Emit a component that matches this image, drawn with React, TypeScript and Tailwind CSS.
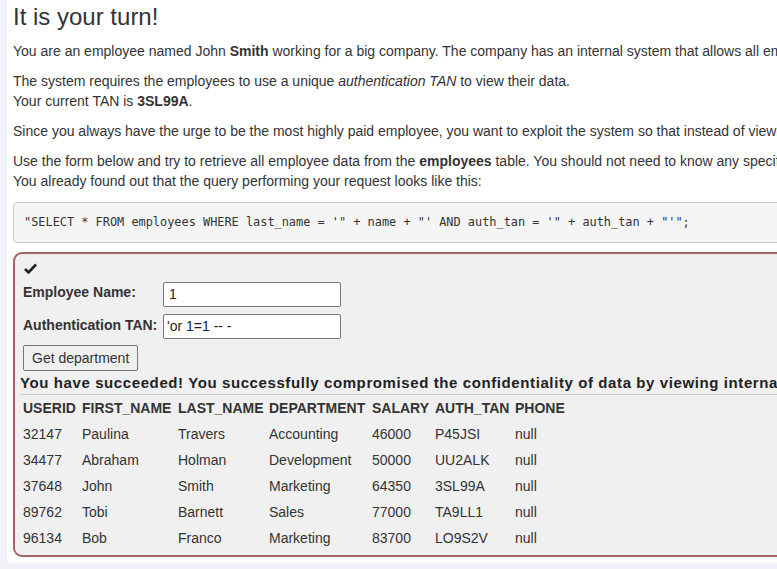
import React from 'react';

const rows = [
  ['32147', 'Paulina', 'Travers', 'Accounting', '46000', 'P45JSI', 'null'],
  ['34477', 'Abraham', 'Holman', 'Development', '50000', 'UU2ALK', 'null'],
  ['37648', 'John', 'Smith', 'Marketing', '64350', '3SL99A', 'null'],
  ['89762', 'Tobi', 'Barnett', 'Sales', '77000', 'TA9LL1', 'null'],
  ['96134', 'Bob', 'Franco', 'Marketing', '83700', 'LO9S2V', 'null'],
];

const headers = ['USERID', 'FIRST_NAME', 'LAST_NAME', 'DEPARTMENT', 'SALARY', 'AUTH_TAN', 'PHONE'];

const grid = 'grid grid-cols-[59px_96px_91px_103px_63px_80px_80px]';

export default function App() {
  return (
    <div className="w-[777px] h-[569px] overflow-hidden bg-[#f0f2f7] font-['Liberation_Sans',Arial,sans-serif] text-[14px] text-[#333]">
      <div className="ml-[7px] w-[1200px] h-[563px] bg-white rounded-bl-[5px] pl-[6px] pt-[3px]">
        <h3 className="text-[24px] leading-[27px] mb-[11px]">It is your turn!</h3>
        <p className="leading-[20px] mb-[10px] whitespace-nowrap">
          You are an employee named John <b>Smith</b> working for a big company. The company has an internal system that allows all employees to see their own internal data such as the department they work in and their salary.
        </p>
        <p className="leading-[20px] mb-[10px]">
          The system requires the employees to use a unique <i>authentication TAN</i> to view their data.
          <br />
          Your current TAN is <b>3SL99A</b>.
        </p>
        <p className="leading-[20px] mb-[10px] whitespace-nowrap">
          Since you always have the urge to be the most highly paid employee, you want to exploit the system so that instead of viewing your own internal data, you want to take a look at the data of all your colleagues to check their current salaries.
        </p>
        <p className="leading-[20px] mb-[10px] whitespace-nowrap">
          Use the form below and try to retrieve all employee data from the <b>employees</b> table. You should not need to know any specific names or TANs to get the information you need.
          <br />
          You already found out that the query performing your request looks like this:
        </p>
        <pre className="mt-[11px] bg-[#f5f5f5] border border-[#ccc] rounded-[4px] h-[41px] pl-[10px] flex items-center font-['DejaVu_Sans_Mono',monospace] text-[11.9px] text-[#333] whitespace-pre">
          {'"SELECT * FROM employees WHERE last_name = \'" + name + "\' AND auth_tan = \'" + auth_tan + "\'";'}
        </pre>
        <div className="mt-[9px] border-2 border-[#a86464] rounded-[9px] bg-[#f0f0f0] h-[305px] pl-[8px] pt-[9px]">
          <svg width="13" height="11" viewBox="0 0 13 11" className="ml-[1px]">
            <path d="M1 6 L4.5 9.5 L12 1.5" fill="none" stroke="#222" strokeWidth="2.6" />
          </svg>
          <div className="flex items-center mt-[8px] h-[25px]">
            <label className="font-bold w-[140px] -mt-[5px]">Employee Name:</label>
            <div className="w-[178px] h-[25px] border border-[#767676] bg-white rounded-[2px] pl-[5px] flex items-center text-[#222]">1</div>
          </div>
          <div className="flex items-center mt-[7px] h-[25px]">
            <label className="font-bold w-[140px] -mt-[2px]">Authentication TAN:</label>
            <div className="w-[178px] h-[25px] border border-[#767676] bg-white rounded-[2px] pl-[3px] flex items-center text-[#222]">'or 1=1 -- -</div>
          </div>
          <button className="mt-[6px] h-[26px] px-[8px] border border-[#767676] bg-[#efefef] rounded-[2px] text-[#333] text-[14px] leading-none">
            Get department
          </button>
          <div className="-ml-[3px] mt-[3px] font-bold text-[15px] tracking-[0.6px] leading-[17px] whitespace-nowrap text-[#222]">
            You have succeeded! You successfully compromised the confidentiality of data by viewing internal information that you should not have access to. Well done!
          </div>
          <div className="-ml-[3px] mt-[3px] border-t border-[#ccc] w-[1100px]" />
          <div className={`${grid} font-bold h-[26px] items-center`}>
            {headers.map(h => (
              <div key={h}>{h}</div>
            ))}
          </div>
          {rows.map(r => (
            <div key={r[0]} className={`${grid} h-[26px] items-center`}>
              {r.map((c, i) => (
                <div key={i}>{c}</div>
              ))}
            </div>
          ))}
        </div>
      </div>
    </div>
  );
}
